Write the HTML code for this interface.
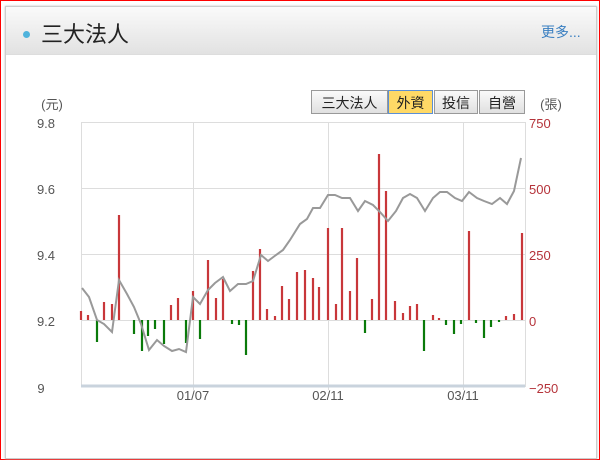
<!DOCTYPE html>
<html><head><meta charset="utf-8"><style>
body{margin:0;width:600px;height:460px;overflow:hidden;background:#fff;font-family:"Liberation Sans","Noto Sans CJK TC",sans-serif}
.frame{position:absolute;left:0;top:0;width:598px;height:458px;border:1px solid #f00}
.panel{position:absolute;left:5px;top:6px;width:590px;height:451px;border:1px solid #ccc;box-shadow:0 0 2px #bbb}
.hdr{position:absolute;left:0;top:0;width:590px;height:47px;background:linear-gradient(#fafafa,#e2e2e2);border-bottom:1px solid #ddd}
.dot{position:absolute;left:17px;top:24px;width:7px;height:7px;border-radius:50%;background:#4fb3dc}
.title{position:absolute;left:35px;top:10px;font-size:22px;color:#222}
.more{position:absolute;left:535px;top:15px;font-size:14px;color:#3a7fc1}
.btn{position:absolute;top:90px;height:24px;line-height:24px;font-size:14px;text-align:center;background:linear-gradient(#fafafa,#e0e0e0);border:1px solid #999;box-sizing:border-box;color:#222}
</style></head><body>
<div class="frame"></div>
<div class="panel"><div class="hdr"><div class="dot"></div><div class="title">三大法人</div><div class="more">更多...</div></div></div>
<div class="btn" style="left:311px;width:77px">三大法人</div>
<div class="btn" style="left:388px;width:45px;background:#ffd966;border:1px solid #5b8fd6">外資</div>
<div class="btn" style="left:434px;width:44px">投信</div>
<div class="btn" style="left:479px;width:46px">自營</div>
<svg width="600" height="460" style="position:absolute;left:0;top:0" font-family="Liberation Sans,sans-serif" font-size="13">
<g stroke="#ddd" stroke-width="1">
<line x1="81" y1="122.5" x2="525" y2="122.5"/><line x1="81" y1="188.5" x2="525" y2="188.5"/><line x1="81" y1="254.5" x2="525" y2="254.5"/><line x1="81" y1="320.5" x2="525" y2="320.5"/>
<line x1="81.5" y1="122" x2="81.5" y2="387"/><line x1="193.5" y1="122" x2="193.5" y2="390"/><line x1="328.5" y1="122" x2="328.5" y2="390"/><line x1="463.5" y1="122" x2="463.5" y2="390"/><line x1="525.5" y1="122" x2="525.5" y2="387"/>
</g>
<line x1="81" y1="386" x2="525" y2="386" stroke="#c9d3dd" stroke-width="3"/>
<g stroke-width="2.2">
<g stroke="#c8373a">
<line x1="81" y1="320" x2="81" y2="311"/><line x1="88" y1="320" x2="88" y2="315"/><line x1="104" y1="320" x2="104" y2="302"/><line x1="112" y1="320" x2="112" y2="304"/><line x1="119" y1="320" x2="119" y2="215"/><line x1="171" y1="320" x2="171" y2="305"/><line x1="178" y1="320" x2="178" y2="298"/><line x1="193" y1="320" x2="193" y2="291"/><line x1="208" y1="320" x2="208" y2="260"/><line x1="216" y1="320" x2="216" y2="298"/><line x1="223" y1="320" x2="223" y2="279"/><line x1="253" y1="320" x2="253" y2="271"/><line x1="260" y1="320" x2="260" y2="249"/><line x1="267" y1="320" x2="267" y2="309"/><line x1="275" y1="320" x2="275" y2="316"/><line x1="282" y1="320" x2="282" y2="286"/><line x1="289" y1="320" x2="289" y2="299"/><line x1="297" y1="320" x2="297" y2="272"/><line x1="305" y1="320" x2="305" y2="270"/><line x1="313" y1="320" x2="313" y2="278"/><line x1="319" y1="320" x2="319" y2="287"/><line x1="328" y1="320" x2="328" y2="228"/><line x1="336" y1="320" x2="336" y2="304"/><line x1="342" y1="320" x2="342" y2="228"/><line x1="350" y1="320" x2="350" y2="291"/><line x1="357" y1="320" x2="357" y2="258"/><line x1="372" y1="320" x2="372" y2="299"/><line x1="379" y1="320" x2="379" y2="154"/><line x1="386" y1="320" x2="386" y2="191"/><line x1="395" y1="320" x2="395" y2="301"/><line x1="403" y1="320" x2="403" y2="313"/><line x1="410" y1="320" x2="410" y2="306"/><line x1="417" y1="320" x2="417" y2="304"/><line x1="433" y1="320" x2="433" y2="315"/><line x1="439" y1="320" x2="439" y2="318"/><line x1="469" y1="320" x2="469" y2="231"/><line x1="506" y1="320" x2="506" y2="316"/><line x1="514" y1="320" x2="514" y2="314"/><line x1="522" y1="320" x2="522" y2="233"/>
</g>
<g stroke="#0a7a0a">
<line x1="97" y1="320" x2="97" y2="342"/><line x1="134" y1="320" x2="134" y2="334"/><line x1="142" y1="320" x2="142" y2="351"/><line x1="148" y1="320" x2="148" y2="336"/><line x1="155" y1="320" x2="155" y2="329"/><line x1="164" y1="320" x2="164" y2="344"/><line x1="186" y1="320" x2="186" y2="343"/><line x1="200" y1="320" x2="200" y2="339"/><line x1="232" y1="320" x2="232" y2="324"/><line x1="239" y1="320" x2="239" y2="325"/><line x1="246" y1="320" x2="246" y2="355"/><line x1="365" y1="320" x2="365" y2="333"/><line x1="424" y1="320" x2="424" y2="351"/><line x1="446" y1="320" x2="446" y2="325"/><line x1="454" y1="320" x2="454" y2="334"/><line x1="461" y1="320" x2="461" y2="324"/><line x1="476" y1="320" x2="476" y2="323"/><line x1="484" y1="320" x2="484" y2="338"/><line x1="491" y1="320" x2="491" y2="327"/><line x1="499" y1="320" x2="499" y2="322"/>
</g></g>
<polyline fill="none" stroke="#999" stroke-width="2" points="82,288 89,297 97,320 104,324 112,332 119,280 127,294 134,307 141,324 149,350 157,340 164,346 172,351 179,349 186,352 193,297 200,304 208,290 215,283 223,277 230,291 238,284 246,284 253,281 261,255 268,261 276,255 283,250 290,240 300,224 307,219 313,208 320,208 328,195 335,195 342,198 350,198 358,211 365,201 373,205 380,212 388,221 396,211 403,198 410,194 417,198 425,211 433,198 440,192 447,192 455,198 462,201 469,192 477,198 484,201 492,204 500,198 507,204 514,191 521,158"/>
<g fill="#555" text-anchor="middle">
<text x="52" y="109">(元)</text><text x="46" y="128">9.8</text><text x="46" y="194">9.6</text><text x="46" y="260">9.4</text><text x="46" y="326">9.2</text><text x="41" y="393">9</text>
<text x="193" y="400">01/07</text><text x="328" y="400">02/11</text><text x="463" y="400">03/11</text>
<text x="551" y="109">(張)</text>
</g>
<g fill="#b5333a"><text x="529" y="128">750</text><text x="529" y="194">500</text><text x="529" y="260">250</text><text x="529" y="326">0</text><text x="529" y="393">−250</text></g>
</svg>
</body></html>
